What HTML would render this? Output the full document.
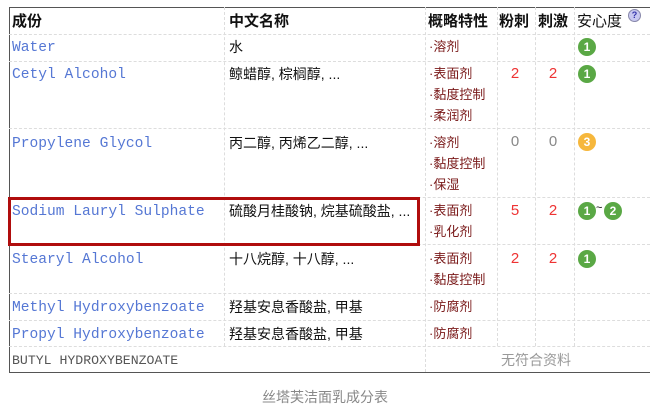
<!DOCTYPE html><html><head><meta charset="utf-8"><style>
*{margin:0;padding:0;box-sizing:border-box}
body{width:650px;height:417px;background:#fff;position:relative;overflow:hidden;font-family:"Liberation Sans","Noto Sans CJK SC",sans-serif}
.a{position:absolute;white-space:nowrap}
.h{font-weight:bold;font-size:15px;color:#111;top:10px}
.m{font-family:"Liberation Mono",monospace;font-size:14.6px;color:#5577d4}
.c{font-size:14px;color:#111}
.p{font-size:13px;color:#7a1a1a;line-height:21px}
.n{font-size:15px;color:#e33;width:20px;text-align:center}
.g{color:#888}
.hl{position:absolute;left:9px;width:641px;border-top:1px dashed #ddd;height:0}
.vl{position:absolute;top:7px;height:365px;border-left:1px dashed #ddd;width:0}
.b{position:absolute;width:18px;height:18px;border-radius:50%;background:#5aa845;color:#fff;font-size:12px;font-weight:bold;text-align:center;line-height:18px}
</style></head><body>
<div style="position:absolute;left:9px;top:7px;width:650px;height:366px;border:1px solid #555;border-right:none"></div>
<div class="hl" style="top:34px"></div><div class="hl" style="top:61px"></div><div class="hl" style="top:128px"></div><div class="hl" style="top:197px"></div><div class="hl" style="top:244px"></div><div class="hl" style="top:293px"></div><div class="hl" style="top:320px"></div><div class="hl" style="top:346px"></div>
<div class="vl" style="left:224px;height:339px"></div><div class="vl" style="left:425px"></div><div class="vl" style="left:497px;height:339px"></div><div class="vl" style="left:535px;height:339px"></div><div class="vl" style="left:574px;height:339px"></div>
<div class="a h" style="left:12px">成份</div><div class="a h" style="left:229px">中文名称</div><div class="a h" style="left:428px">概略特性</div><div class="a h" style="left:499px">粉刺</div><div class="a h" style="left:538px">刺激</div>
<div class="a h" style="left:577px;font-weight:normal">安心度</div>
<div class="a" style="left:628px;top:9px;width:13px;height:13px;border-radius:50%;background:#c8c8f0;border:1px solid #88a;font-size:9px;font-weight:bold;color:#33a;text-align:center;line-height:11px">?</div>
<div class="a m" style="left:12px;top:40px">Water</div><div class="a c" style="left:229px;top:37px">水</div><div class="a p" style="left:429px;top:36px">·溶剂</div><div class="b" style="left:578px;top:38px">1</div>
<div class="a m" style="left:12px;top:67px">Cetyl Alcohol</div><div class="a c" style="left:229px;top:64px">鲸蜡醇, 棕榈醇, ...</div><div class="a p" style="left:429px;top:63px">·表面剂<br>·黏度控制<br>·柔润剂</div><div class="a n" style="left:505px;top:65px">2</div><div class="a n" style="left:543px;top:65px">2</div><div class="b" style="left:578px;top:65px">1</div>
<div class="a m" style="left:12px;top:136px">Propylene Glycol</div><div class="a c" style="left:229px;top:133px">丙二醇, 丙烯乙二醇, ...</div><div class="a p" style="left:429px;top:132px">·溶剂<br>·黏度控制<br>·保湿</div><div class="a n g" style="left:505px;top:133px">0</div><div class="a n g" style="left:543px;top:133px">0</div><div class="b" style="left:578px;top:133px;background:#f6b73c">3</div>
<div class="a m" style="left:12px;top:204px">Sodium Lauryl Sulphate</div><div class="a c" style="left:229px;top:201px">硫酸月桂酸钠, 烷基硫酸盐, ...</div><div class="a p" style="left:429px;top:200px">·表面剂<br>·乳化剂</div><div class="a n" style="left:505px;top:202px">5</div><div class="a n" style="left:543px;top:202px">2</div><div class="b" style="left:578px;top:202px">1</div><div class="a" style="left:596px;top:202px;font-size:11px">~</div><div class="b" style="left:604px;top:202px">2</div>
<div class="a m" style="left:12px;top:252px">Stearyl Alcohol</div><div class="a c" style="left:229px;top:249px">十八烷醇, 十八醇, ...</div><div class="a p" style="left:429px;top:248px">·表面剂<br>·黏度控制</div><div class="a n" style="left:505px;top:250px">2</div><div class="a n" style="left:543px;top:250px">2</div><div class="b" style="left:578px;top:250px">1</div>
<div class="a m" style="left:12px;top:300px">Methyl Hydroxybenzoate</div><div class="a c" style="left:229px;top:297px">羟基安息香酸盐, 甲基</div><div class="a p" style="left:429px;top:296px">·防腐剂</div>
<div class="a m" style="left:12px;top:327px">Propyl Hydroxybenzoate</div><div class="a c" style="left:229px;top:324px">羟基安息香酸盐, 甲基</div><div class="a p" style="left:429px;top:323px">·防腐剂</div>
<div class="a m" style="left:12px;top:353px;color:#555;font-size:13.2px">BUTYL HYDROXYBENZOATE</div><div class="a" style="left:501px;top:350px;font-size:14px;color:#999">无符合资料</div>
<div style="position:absolute;left:8px;top:197px;width:412px;height:49px;border:3px solid #b00d0d"></div>
<div class="a" style="left:0;width:650px;text-align:center;top:387px;font-size:14px;color:#888">丝塔芙洁面乳成分表</div>
</body></html>
